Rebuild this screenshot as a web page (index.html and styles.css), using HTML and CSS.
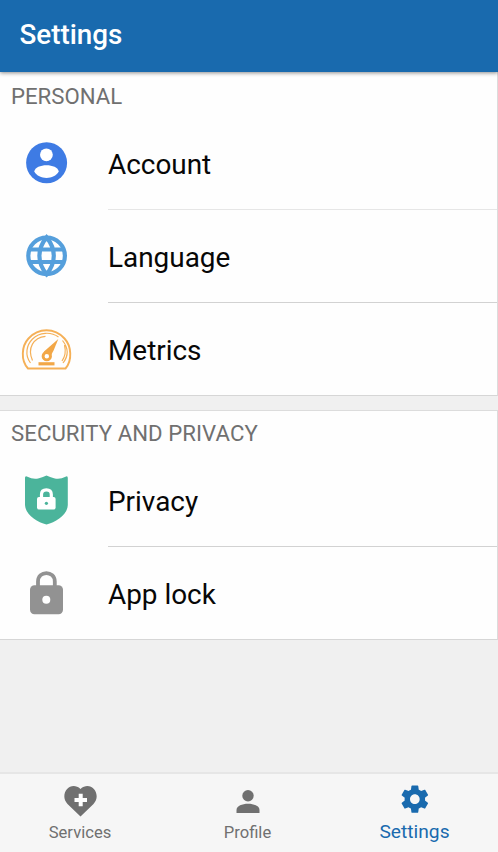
FILE: index.html
```html
<!DOCTYPE html>
<html lang="en">
<head>
<meta charset="utf-8">
<title>Settings</title>
<link rel="stylesheet" href="styles.css">
</head>
<body>
<header class="bar"><h1>Settings</h1></header>
<main>
  <section class="card">
    <h2>PERSONAL</h2>
    <div class="row faint">
      <svg class="icon" viewBox="0 0 80 92"><circle cx="36.6" cy="45.8" r="20.5" fill="#3e7be4"/><circle cx="36.4" cy="37.8" r="6.4" fill="#fff"/><path d="M24.2 54.5C25.5 46 47.5 46 48.8 54.5C44 63 29 63 24.2 54.5Z" fill="#fff"/></svg>
      <div class="label">Account</div>
    </div>
    <div class="row">
      <svg class="icon" viewBox="0 0 80 92" fill="none" stroke="#559fdc" stroke-width="4.2"><circle cx="36.6" cy="45.8" r="18.3"/><path d="M36.6 27.3C27 39 27 52.6 36.6 64.3C46.200 52.6 46.200 39 36.6 27.3ZM19 39.5H54.2M19 52H54.2"/></svg>
      <div class="label">Language</div>
    </div>
    <div class="row">
      <svg class="icon" viewBox="0 0 80 92" fill="none" stroke="#f5b057"><path stroke-width="1.9" stroke-linejoin="round" d="M18 65.500C10.500 57.500 11.500 43 18.500 35.500C28.500 24.500 44.500 24.500 54.500 35.500C61.500 43 62.500 57.500 55.500 65.500Z"/><path stroke-width="1.200" d="M20.500 60C14.500 52 16.500 42 22.500 36C29.500 29 41 28.500 48.500 34M52.500 37.500C58.500 45 58.500 53 53 60M22.500 57.500C17 45 23.500 34.500 35.500 33.300M54.500 42C56 48 55.500 53 52 58"/><path fill="#f2a747" stroke="none" d="M48.300 36L34 48.500L33.700 52L41 52.500L43.800 47Z"/><circle cx="36.800" cy="53.200" r="3.700" fill="#fff" stroke="#f2a747" stroke-width="2.900"/><path stroke="#f2a747" stroke-width="3.200" d="M28.500 60.800H44.500"/></svg>
      <div class="label">Metrics</div>
    </div>
  </section>
  <section class="card">
    <h2 class="wide">SECURITY AND PRIVACY</h2>
    <div class="row">
      <svg class="icon" viewBox="0 0 80 92"><path fill="#4bb49b" d="M15 24Q15 21.500 17.500 22.800Q23 25.800 29 24.300Q33 23.300 36.500 21.500Q40 23.300 44 24.300Q50 25.800 55.500 22.800Q57.800 21.500 57.800 24V51C57.500 61 46 68 36.500 70.500C27 68 15.500 61 15 51Z"/><rect x="27" y="43" width="18.600" height="12.500" rx="2" fill="#fff"/><path d="M31.500 44V40.500Q31.500 35.800 36.400 35.800T41.300 40.500V44" fill="none" stroke="#fff" stroke-width="3.200"/><circle cx="36.400" cy="49.300" r="1.600" fill="#4bb49b"/></svg>
      <div class="label">Privacy</div>
    </div>
    <div class="row">
      <svg class="icon" viewBox="0 0 80 92"><rect x="20" y="38.300" width="33" height="28.900" rx="4.500" fill="#929292"/><path d="M28 40V34.500C28 23.300 44.800 23.300 44.800 34.500V40" fill="none" stroke="#929292" stroke-width="3.800"/><circle cx="36.300" cy="52.800" r="4" fill="#fff"/></svg>
      <div class="label">App lock</div>
    </div>
  </section>
</main>
<nav>
  <a class="tab"><svg viewBox="0 0 40 40"><path fill="#707070" d="M20.500 36.500L7.500 24C-1.500 14 10.500 0 20.500 9C30.500 0 42.500 14 33.500 24Z"/><path stroke="#fff" stroke-width="4" d="M14.500 20H27M20.700 13.800V26.300"/></svg><span>Services</span></a>
  <a class="tab"><svg viewBox="0 0 40 40" fill="#707070"><circle cx="20" cy="15.800" r="5.700"/><path d="M8.500 33V30C8.500 21.700 31.500 21.700 31.500 30V33Z"/></svg><span>Profile</span></a>
  <a class="tab active"><svg viewBox="0 0 40 40"><g transform="translate(2.800 2.100) scale(1.420)"><path fill="#196aae" d="M19.140 12.940c.04-.3.060-.61.060-.94 0-.32-.02-.64-.07-.94l2.030-1.580c.18-.14.230-.41.120-.61l-1.920-3.320c-.12-.22-.37-.29-.59-.22l-2.390.96c-.5-.38-1.030-.7-1.620-.94l-.36-2.540c-.04-.24-.24-.41-.48-.41h-3.840c-.24 0-.43.17-.47.410l-.36 2.540c-.59.240-1.130.57-1.620.94l-2.390-.96c-.22-.08-.47 0-.59.220L2.740 8.870c-.12.210-.08.470.12.610l2.030 1.580c-.05.3-.09.630-.09.940s.02.640.07.940l-2.030 1.580c-.18.140-.23.410-.12.610l1.920 3.320c.12.220.37.290.59.220l2.390-.96c.5.380 1.030.7 1.620.94l.36 2.540c.05.240.24.410.48.410h3.840c.24 0 .44-.17.470-.41l.36-2.540c.59-.24 1.130-.56 1.620-.94l2.390.96c.22.080.47 0 .59-.22l1.920-3.320c.12-.22.070-.47-.12-.61zM12 15.400c-1.880 0-3.400-1.520-3.400-3.400s1.520-3.400 3.400-3.400 3.400 1.520 3.400 3.400-1.520 3.400-3.400 3.400z"/></g></svg><span>Settings</span></a>
</nav>
</body>
</html>
```
FILE: styles.css
```css
* { box-sizing: border-box; }
body {
  margin: 0;
  height: 852px;
  display: flex;
  flex-direction: column;
  overflow: hidden;
  background: #f0f0f0;
  font-family: Roboto, "Liberation Sans", sans-serif;
}
h1, h2 { margin: 0; }
.bar {
  position: relative;
  height: 72px;
  padding: 18px 0 0 19.500px;
  background: #196aae;
  box-shadow: 0 1px 4px rgba(0, 0, 0, .45);
  color: #fff;
}
h1 { font-size: 27.800px; line-height: 34px; font-weight: 500; }
main { flex: 1; }
.card {
  background: #fefefe;
  border-right: 1px solid #dcdcdc;
  border-bottom: 1px solid #d6d6d6;
}
.card + .card { margin-top: 14px; border-top: 1px solid #dcdcdc; }
h2 {
  height: 45px;
  padding: 10px 0 0 11px;
  color: #707070;
  font-size: 22.200px;
  line-height: 28px;
  font-weight: 400;
}
h2.wide { height: 43px; padding-top: 8px; letter-spacing: .05px; }
.row { display: flex; height: 93px; padding-left: 10px; }
.row:last-child { height: 92px; }
.icon { width: 80px; height: 92px; }
.label {
  flex: 1;
  margin-left: 18px;
  padding-top: 30px;
  border-bottom: 1px solid #d2d2d2;
  color: #070707;
  font-size: 27.900px;
  line-height: 36px;
}
.faint .label { border-color: #e6e6e6; }
.row:last-child .label { border: 0; }
nav {
  height: 80px;
  display: grid;
  grid-template-columns: 160px 175px 1fr;
  background: #f6f6f6;
  border-top: 2px solid #e6e6e6;
}
.tab {
  display: flex;
  flex-direction: column;
  align-items: center;
  padding-top: 6px;
  color: #707070;
  font-size: 16.600px;
  line-height: 25px;
}
.tab svg { width: 40px; height: 40px; }
.tab.active {
  color: #196aae;
  font-size: 19.200px;
  line-height: 24px;
  padding-right: 4px;
}
```
